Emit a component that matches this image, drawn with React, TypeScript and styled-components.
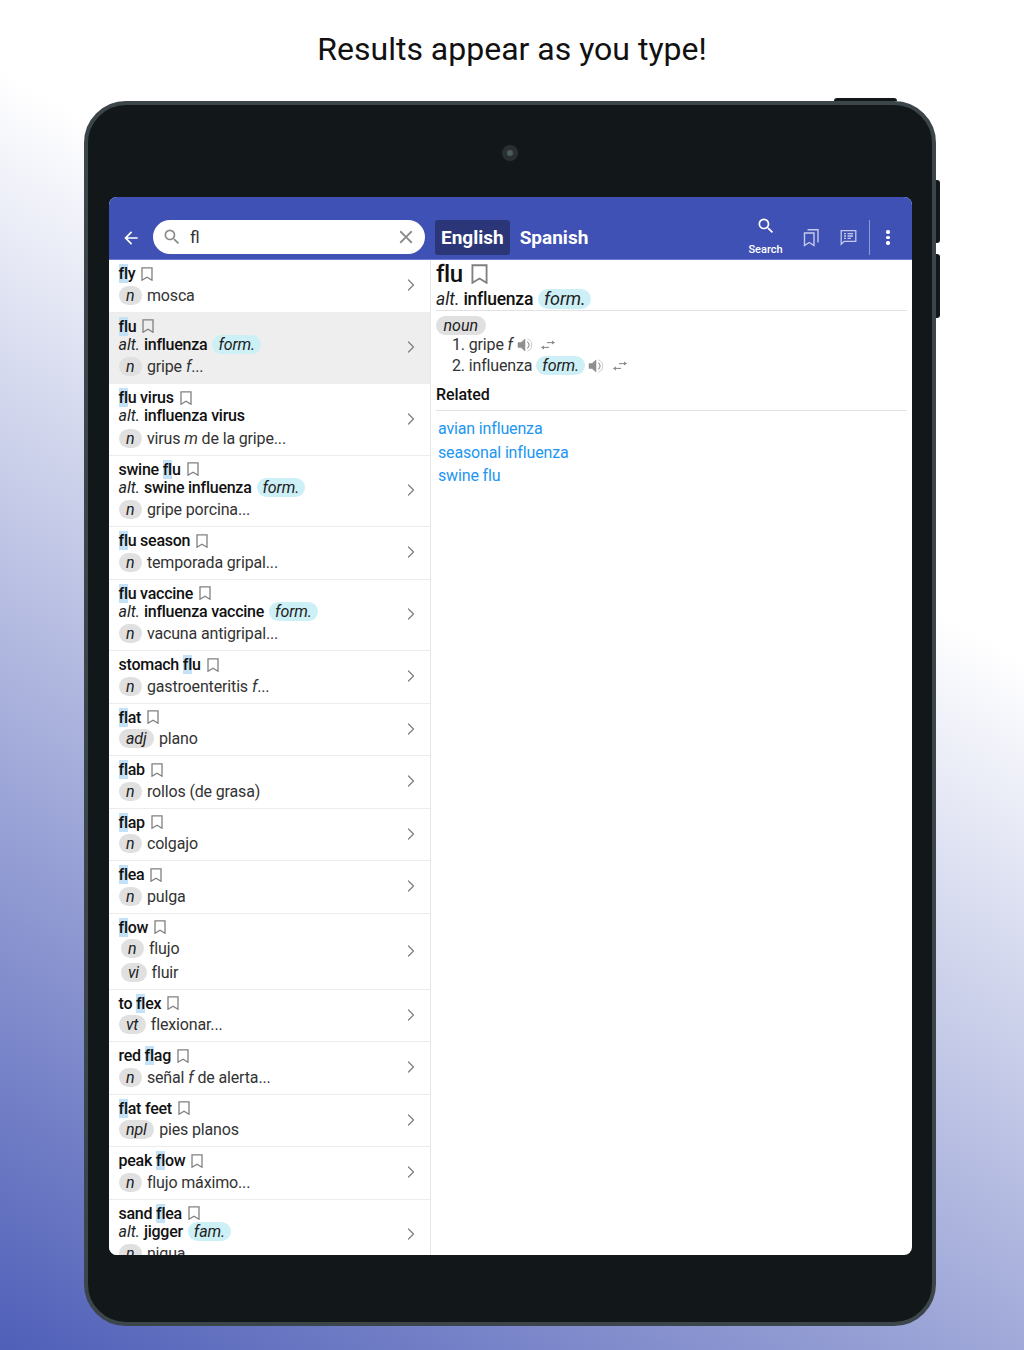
import React from "react";
import styled, { createGlobalStyle } from "styled-components";
import { ChevronRight } from "lucide-react";
import { MdArrowBack, MdClose, MdSearch } from "react-icons/md";

const GlobalStyle = createGlobalStyle`
  html, body {
    margin: 0;
    padding: 0;
  }
  body {
    font-family: Roboto, "Liberation Sans", sans-serif;
    color: #111;
  }
`;

const Page = styled.div`
  width: 1024px;
  height: 1350px;
  overflow: hidden;
  box-sizing: border-box;
  padding: 0 88px 0 84px;
  background: linear-gradient(210deg, #fff 34%, #4f5fb8 100%);
`;

const Title = styled.h1`
  height: 101px;
  margin: 0;
  padding-top: 30px;
  box-sizing: border-box;
  font-size: 32px;
  line-height: 38px;
  font-weight: 400;
  text-align: center;
  color: #111;
  width: 856px;
`;

const Device = styled.div`
  position: relative;
  width: 852px;
  height: 1225px;
  box-sizing: border-box;
  border: 4px solid #3c4549;
  border-radius: 42px;
  background: #121819;
  padding: 0 20px 67px 21px;
  display: flex;
  flex-direction: column;
`;

const TopButton = styled.div`
  position: absolute;
  top: -7px;
  left: 746px;
  width: 63px;
  height: 3px;
  background: #121819;
  border-radius: 3px 3px 0 0;
`;

const SideButton = styled.div<{ $top: number; $h: number }>`
  position: absolute;
  right: -8px;
  top: ${(p) => p.$top}px;
  width: 4px;
  height: ${(p) => p.$h}px;
  background: #121819;
  border-radius: 0 3px 3px 0;
`;

const Bezel = styled.div`
  height: 92px;
  flex: none;
  display: flex;
  align-items: center;
  justify-content: center;
  padding: 4px 2px 0 0;
  box-sizing: border-box;
`;

const Camera = styled.div`
  width: 16px;
  height: 16px;
  box-sizing: border-box;
  border-radius: 50%;
  border: 5px solid #2a3031;
  background: #4b5a5c;
`;

const Screen = styled.div`
  flex: 1;
  min-height: 0;
  background: #fff;
  border-radius: 8px;
  overflow: hidden;
  display: flex;
  flex-direction: column;
`;

const Toolbar = styled.div`
  height: 63px;
  flex: none;
  box-sizing: border-box;
  background: #3f51b5;
  border-bottom: 1px solid #6d7dd6;
  display: flex;
  align-items: flex-end;
  padding: 0 0 4px 0;
`;

const BackButton = styled.div`
  width: 44px;
  height: 35px;
  display: flex;
  align-items: center;
  justify-content: center;
  color: #fff;
`;

const SearchBox = styled.div`
  width: 272px;
  height: 34px;
  margin-bottom: 1px;
  box-sizing: border-box;
  background: #fff;
  border-radius: 17px;
  display: flex;
  align-items: center;
  padding: 0 8px 0 9px;
  color: #8a8a8a;
`;

const SearchValue = styled.span`
  flex: 1;
  margin-left: 8px;
  font-size: 17px;
  color: #333;
`;

const LangTab = styled.div<{ $active?: boolean }>`
  height: 35px;
  padding: 0 6px;
  margin-left: ${(p) => (p.$active ? 10 : 4)}px;
  border-radius: 3px;
  background: ${(p) => (p.$active ? "#2b3678" : "transparent")};
  color: #fff;
  font-size: 19px;
  font-weight: 700;
  line-height: 36px;
`;

const ToolActions = styled.div`
  margin-left: auto;
  height: 35px;
  display: flex;
  align-items: center;
  color: #c5cbec;
`;

const SearchAction = styled.div`
  width: 52px;
  margin: -4px 1.5px 0 0;
  align-self: flex-start;
  display: flex;
  flex-direction: column;
  align-items: center;
  color: #fff;
  font-size: 11px;
  font-weight: 500;
  line-height: 12px;
  gap: 8px;
`;

const ActionIcon = styled.div`
  width: 37px;
  display: flex;
  justify-content: center;
`;

const Divider = styled.div`
  width: 1px;
  height: 35px;
  margin-left: 2px;
  background: #8e9ad6;
`;

const Dots = styled.div`
  width: 36px;
  margin-right: 6px;
  display: flex;
  flex-direction: column;
  align-items: center;
  gap: 2px;
  span {
    width: 3.4px;
    height: 3.4px;
    border-radius: 50%;
    background: #fff;
  }
`;

const Body = styled.div`
  flex: 1;
  min-height: 0;
  display: flex;
`;

const List = styled.div`
  width: 322px;
  flex: none;
  overflow: hidden;
  box-sizing: border-box;
  border-right: 1px solid #e6e6e6;
`;

const Row = styled.div<{ $selected?: boolean }>`
  display: flex;
  align-items: center;
  box-sizing: border-box;
  padding: 3.5px 9px 4.5px 9.5px;
  border-bottom: 1px solid #ececec;
  background: ${(p) => (p.$selected ? "#eeeeee" : "#fff")};
  color: #808080;
`;

const RowText = styled.div`
  flex: 1;
  min-width: 0;
  color: #111;
`;

const Head = styled.div`
  height: 20px;
  display: flex;
  align-items: center;
  font-size: 16px;
  font-weight: 500;
  letter-spacing: -0.25px;
  white-space: pre;
  color: #111;
`;

const Mark = styled.span`
  background: #c3e2f8;
`;

const MarkIcon = styled.svg<{ $gap?: number }>`
  margin-left: ${(p) => p.$gap ?? 6}px;
  flex: none;
  fill: none;
  stroke: #808080;
  stroke-width: 1.3;
`;

const AltLine = styled.div`
  height: 19px;
  margin: -1.5px 0 1.5px;
  display: flex;
  align-items: center;
  font-size: 16px;
  white-space: pre;
`;

const Alt = styled.em`
  font-weight: 400;
  margin-right: 4px;
  color: #222;
`;

const AltWord = styled.span`
  font-weight: 500;
  letter-spacing: -0.25px;
`;

const Register = styled.em<{ $large?: boolean }>`
  display: inline-block;
  margin-left: 5px;
  padding: 0 6px;
  height: ${(p) => (p.$large ? 20 : 19)}px;
  line-height: ${(p) => (p.$large ? 20 : 19)}px;
  border-radius: 10px;
  background: #cdf0f7;
  font-size: ${(p) => (p.$large ? 18 : 16)}px;
  font-weight: 400;
  letter-spacing: -0.1px;
  color: #222;
`;

const Sense = styled.div<{ $indent?: number }>`
  height: 23.5px;
  display: flex;
  align-items: center;
  padding-left: ${(p) => p.$indent ?? 0}px;
  font-size: 16px;
  font-weight: 400;
  letter-spacing: -0.15px;
  white-space: pre;
  color: #333;
`;

const Pos = styled.em`
  display: inline-block;
  height: 19px;
  line-height: 19px;
  padding: 0 7.5px;
  margin-right: 5px;
  border-radius: 10px;
  background: #e0e0e0;
  font-size: 16px;
  font-weight: 400;
  color: #222;
`;

const Gender = styled.em`
  font-weight: 400;
  margin-left: 4px;
`;

const Detail = styled.div`
  flex: 1;
  min-width: 0;
  padding: 0 5px 0 5px;
`;

const DetailHead = styled.div`
  height: 28px;
  display: flex;
  align-items: center;
  font-size: 24px;
  font-weight: 500;
  letter-spacing: -0.4px;
  color: #111;
`;

const DetailAlt = styled.div`
  height: 22px;
  display: flex;
  align-items: center;
  padding-bottom: 1px;
  box-sizing: border-box;
  font-size: 17.5px;
  white-space: pre;
`;

const Rule = styled.div`
  height: 1px;
  background: #e2e2e2;
`;

const PosLine = styled.div`
  margin: 5px 0 -1px;
  height: 19px;
  display: flex;
`;

const SenseLine = styled.div`
  height: 21px;
  padding-left: 16px;
  display: flex;
  align-items: center;
  font-size: 16px;
  font-weight: 400;
  letter-spacing: -0.15px;
  white-space: pre;
  color: #333;
  ${Register} {
    margin-left: 4px;
  }
`;

const SoundIcon = styled.svg<{ $gap: number }>`
  margin-left: ${(p) => p.$gap}px;
  fill: #8f8f8f;
  stroke: #8f8f8f;
  flex: none;
`;

const SwapIcon = styled.svg<{ $gap: number }>`
  margin-left: ${(p) => p.$gap}px;
  fill: none;
  stroke: #8a8a8a;
  stroke-width: 1.1;
  flex: none;
`;

const SectionTitle = styled.div`
  margin-top: 6px;
  height: 28px;
  font-size: 16px;
  line-height: 26px;
  font-weight: 500;
  letter-spacing: -0.1px;
  color: #111;
`;

const Links = styled.div`
  margin-top: 6px;
  padding-left: 2px;
`;

const RelatedLink = styled.div`
  height: 23.6px;
  line-height: 23.6px;
  font-size: 16px;
  letter-spacing: -0.15px;
  color: #2196f3;
`;

const Bookmark = ({ w = 12, h = 14, gap }: { w?: number; h?: number; gap?: number }) => (
  <MarkIcon $gap={gap} width={w} height={h} viewBox="0 0 12 14">
    <path d="M1 .8h10v12.4L6 10.2l-5 3z" />
  </MarkIcon>
);

const Sound = ({ gap }: { gap: number }) => (
  <SoundIcon $gap={gap} width="16" height="16" viewBox="0 0 16 16">
    <path d="M1 5.5h3L8 2v12l-4-3.5H1z" strokeWidth="0.5" />
    <path d="M10.2 4.6a4 4 0 0 1 0 6.8" fill="none" strokeWidth="1.1" />
    <path d="M10.4 1.8a6.6 6.6 0 0 1 0 12.4" fill="none" strokeWidth="0.9" opacity="0.5" />
  </SoundIcon>
);

const Swap = ({ gap }: { gap: number }) => (
  <SwapIcon $gap={gap} width="14" height="10" viewBox="0 0 14 10">
    <path d="M6 2.6h7.5" />
    <path d="M11 .6v4l2.8-2z" fill="#8a8a8a" stroke="none" />
    <path d="M.5 7.4H8" />
    <path d="M3 5.4v4L.2 7.4z" fill="#8a8a8a" stroke="none" />
  </SwapIcon>
);

interface Entry {
  head: [string, string, string];
  alt?: string;
  tag?: string;
  senses: { pos: string; text: string; gender?: string; rest?: string }[];
  indent?: number;
  selected?: boolean;
}

const entries: Entry[] = [
  { head: ["", "fl", "y"], senses: [{ pos: "n", text: "mosca" }] },
  {
    head: ["", "fl", "u"],
    alt: "influenza",
    tag: "form.",
    selected: true,
    senses: [{ pos: "n", text: "gripe", gender: "f", rest: "..." }],
  },
  {
    head: ["", "fl", "u virus"],
    alt: "influenza virus",
    senses: [{ pos: "n", text: "virus", gender: "m", rest: " de la gripe..." }],
  },
  {
    head: ["swine ", "fl", "u"],
    alt: "swine influenza",
    tag: "form.",
    senses: [{ pos: "n", text: "gripe porcina..." }],
  },
  { head: ["", "fl", "u season"], senses: [{ pos: "n", text: "temporada gripal..." }] },
  {
    head: ["", "fl", "u vaccine"],
    alt: "influenza vaccine",
    tag: "form.",
    senses: [{ pos: "n", text: "vacuna antigripal..." }],
  },
  {
    head: ["stomach ", "fl", "u"],
    senses: [{ pos: "n", text: "gastroenteritis", gender: "f", rest: "..." }],
  },
  { head: ["", "fl", "at"], senses: [{ pos: "adj", text: "plano" }] },
  { head: ["", "fl", "ab"], senses: [{ pos: "n", text: "rollos (de grasa)" }] },
  { head: ["", "fl", "ap"], senses: [{ pos: "n", text: "colgajo" }] },
  { head: ["", "fl", "ea"], senses: [{ pos: "n", text: "pulga" }] },
  {
    head: ["", "fl", "ow"],
    indent: 2,
    senses: [
      { pos: "n", text: "flujo" },
      { pos: "vi", text: "fluir" },
    ],
  },
  { head: ["to ", "fl", "ex"], senses: [{ pos: "vt", text: "flexionar..." }] },
  {
    head: ["red ", "fl", "ag"],
    senses: [{ pos: "n", text: "señal", gender: "f", rest: " de alerta..." }],
  },
  { head: ["", "fl", "at feet"], senses: [{ pos: "npl", text: "pies planos" }] },
  { head: ["peak ", "fl", "ow"], senses: [{ pos: "n", text: "flujo máximo..." }] },
  {
    head: ["sand ", "fl", "ea"],
    alt: "jigger",
    tag: "fam.",
    senses: [{ pos: "n", text: "nigua" }],
  },
];

const related = ["avian influenza", "seasonal influenza", "swine flu"];

const App = () => {
  return (
    <Page>
      <GlobalStyle />
      <Title>Results appear as you type!</Title>
      <Device>
        <TopButton />
        <SideButton $top={75} $h={63} />
        <SideButton $top={149} $h={64} />
        <Bezel>
          <Camera />
        </Bezel>
        <Screen>
          <Toolbar>
            <BackButton>
              <MdArrowBack size={20} />
            </BackButton>
            <SearchBox>
              <MdSearch size={20} />
              <SearchValue>fl</SearchValue>
              <MdClose size={22} />
            </SearchBox>
            <LangTab $active>English</LangTab>
            <LangTab>Spanish</LangTab>
            <ToolActions>
              <SearchAction>
                <MdSearch size={20} />
                Search
              </SearchAction>
              <ActionIcon>
                <svg width="17" height="19" viewBox="0 0 17 19" fill="none" stroke="currentColor" strokeWidth="1.4">
                  <path d="M1.5 5h9.5v12.5l-4.75-3-4.75 3z" />
                  <path d="M4.5 1.8H15v12.7" />
                </svg>
              </ActionIcon>
              <ActionIcon>
                <svg width="17" height="17" viewBox="0 0 17 17" fill="none" stroke="currentColor" strokeWidth="1.3">
                  <path d="M1.2 1.7h14.6v10.6H4.2l-3 3z" />
                  <path d="M4 4.6h2M7.5 4.6H13M4 7h2M7.5 7H13M4 9.4h2M7.5 9.4h3.5" />
                </svg>
              </ActionIcon>
              <Divider />
              <Dots>
                <span />
                <span />
                <span />
              </Dots>
            </ToolActions>
          </Toolbar>
          <Body>
            <List>
              {entries.map((e, i) => (
                <Row key={i} $selected={e.selected}>
                  <RowText>
                    <Head>
                      {e.head[0]}
                      <Mark>{e.head[1]}</Mark>
                      {e.head[2]}
                      <Bookmark />
                    </Head>
                    {e.alt && (
                      <AltLine>
                        <Alt>alt.</Alt>
                        <AltWord>{e.alt}</AltWord>
                        {e.tag && <Register>{e.tag}</Register>}
                      </AltLine>
                    )}
                    {e.senses.map((s) => (
                      <Sense key={s.pos} $indent={e.indent}>
                        <Pos>{s.pos}</Pos>
                        {s.text}
                        {s.gender && <Gender>{s.gender}</Gender>}
                        {s.rest}
                      </Sense>
                    ))}
                  </RowText>
                  <ChevronRight size={20} strokeWidth={1.5} />
                </Row>
              ))}
            </List>
            <Detail>
              <DetailHead>
                flu
                <Bookmark w={17} h={20} gap={8} />
              </DetailHead>
              <DetailAlt>
                <Alt>alt.</Alt>
                <AltWord>influenza</AltWord>
                <Register $large>form.</Register>
              </DetailAlt>
              <Rule />
              <PosLine>
                <Pos>noun</Pos>
              </PosLine>
              <SenseLine>
                1. gripe <em>f</em>
                <Sound gap={4} />
                <Swap gap={8} />
              </SenseLine>
              <SenseLine>
                2. influenza
                <Register>form.</Register>
                <Sound gap={3} />
                <Swap gap={9} />
              </SenseLine>
              <SectionTitle>Related</SectionTitle>
              <Rule />
              <Links>
                {related.map((r) => (
                  <RelatedLink key={r}>{r}</RelatedLink>
                ))}
              </Links>
            </Detail>
          </Body>
        </Screen>
      </Device>
    </Page>
  );
};

export default App;
